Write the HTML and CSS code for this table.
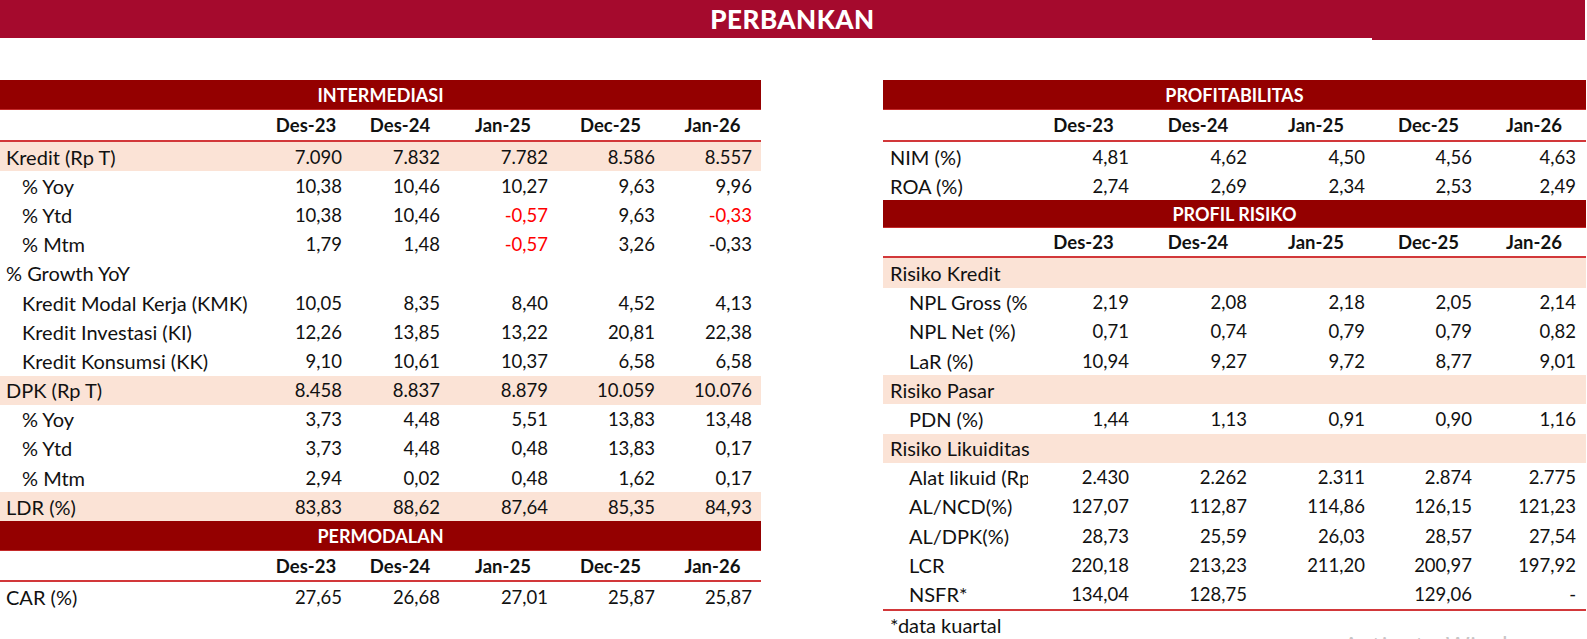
FILE: index.html
```html
<!DOCTYPE html>
<html lang="id">
<head>
<meta charset="utf-8">
<title>Perbankan</title>
<link rel="stylesheet" href="styles.css">
</head>
<body>
<div class="title">PERBANKAN</div>
<div class="main">
  <section class="panel left">
    <div class="bar">INTERMEDIASI</div>
    <div class="row head"><span></span><span>Des-23</span><span>Des-24</span><span>Jan-25</span><span>Dec-25</span><span>Jan-26</span></div>
    <div class="row hl"><span class="lbl">Kredit (Rp T)</span><span>7.090</span><span>7.832</span><span>7.782</span><span>8.586</span><span>8.557</span></div>
    <div class="row"><span class="lbl sub">% Yoy</span><span>10,38</span><span>10,46</span><span>10,27</span><span>9,63</span><span>9,96</span></div>
    <div class="row"><span class="lbl sub">% Ytd</span><span>10,38</span><span>10,46</span><span class="neg">-0,57</span><span>9,63</span><span class="neg">-0,33</span></div>
    <div class="row"><span class="lbl sub">% Mtm</span><span>1,79</span><span>1,48</span><span class="neg">-0,57</span><span>3,26</span><span>-0,33</span></div>
    <div class="row"><span class="lbl">% Growth YoY</span><span></span><span></span><span></span><span></span><span></span></div>
    <div class="row"><span class="lbl sub">Kredit Modal Kerja (KMK)</span><span>10,05</span><span>8,35</span><span>8,40</span><span>4,52</span><span>4,13</span></div>
    <div class="row"><span class="lbl sub">Kredit Investasi (KI)</span><span>12,26</span><span>13,85</span><span>13,22</span><span>20,81</span><span>22,38</span></div>
    <div class="row"><span class="lbl sub">Kredit Konsumsi (KK)</span><span>9,10</span><span>10,61</span><span>10,37</span><span>6,58</span><span>6,58</span></div>
    <div class="row hl"><span class="lbl">DPK (Rp T)</span><span>8.458</span><span>8.837</span><span>8.879</span><span>10.059</span><span>10.076</span></div>
    <div class="row"><span class="lbl sub">% Yoy</span><span>3,73</span><span>4,48</span><span>5,51</span><span>13,83</span><span>13,48</span></div>
    <div class="row"><span class="lbl sub">% Ytd</span><span>3,73</span><span>4,48</span><span>0,48</span><span>13,83</span><span>0,17</span></div>
    <div class="row"><span class="lbl sub">% Mtm</span><span>2,94</span><span>0,02</span><span>0,48</span><span>1,62</span><span>0,17</span></div>
    <div class="row hl"><span class="lbl">LDR (%)</span><span>83,83</span><span>88,62</span><span>87,64</span><span>85,35</span><span>84,93</span></div>
    <div class="bar">PERMODALAN</div>
    <div class="row head mid"><span></span><span>Des-23</span><span>Des-24</span><span>Jan-25</span><span>Dec-25</span><span>Jan-26</span></div>
    <div class="row"><span class="lbl">CAR (%)</span><span>27,65</span><span>26,68</span><span>27,01</span><span>25,87</span><span>25,87</span></div>
  </section>

  <section class="panel right">
    <div class="bar">PROFITABILITAS</div>
    <div class="row head"><span></span><span>Des-23</span><span>Des-24</span><span>Jan-25</span><span>Dec-25</span><span>Jan-26</span></div>
    <div class="row"><span class="lbl">NIM (%)</span><span>4,81</span><span>4,62</span><span>4,50</span><span>4,56</span><span>4,63</span></div>
    <div class="row"><span class="lbl">ROA (%)</span><span>2,74</span><span>2,69</span><span>2,34</span><span>2,53</span><span>2,49</span></div>
    <div class="bar short">PROFIL RISIKO</div>
    <div class="row head short"><span></span><span>Des-23</span><span>Des-24</span><span>Jan-25</span><span>Dec-25</span><span>Jan-26</span></div>
    <div class="row hl"><span class="lbl grp">Risiko Kredit</span><span></span><span></span><span></span><span></span><span></span></div>
    <div class="row"><span class="lbl sub">NPL Gross (%)</span><span>2,19</span><span>2,08</span><span>2,18</span><span>2,05</span><span>2,14</span></div>
    <div class="row"><span class="lbl sub">NPL Net (%)</span><span>0,71</span><span>0,74</span><span>0,79</span><span>0,79</span><span>0,82</span></div>
    <div class="row"><span class="lbl sub">LaR (%)</span><span>10,94</span><span>9,27</span><span>9,72</span><span>8,77</span><span>9,01</span></div>
    <div class="row hl"><span class="lbl grp">Risiko Pasar</span><span></span><span></span><span></span><span></span><span></span></div>
    <div class="row"><span class="lbl sub">PDN (%)</span><span>1,44</span><span>1,13</span><span>0,91</span><span>0,90</span><span>1,16</span></div>
    <div class="row hl"><span class="lbl grp">Risiko Likuiditas</span><span></span><span></span><span></span><span></span><span></span></div>
    <div class="row"><span class="lbl sub">Alat likuid (Rp T)</span><span>2.430</span><span>2.262</span><span>2.311</span><span>2.874</span><span>2.775</span></div>
    <div class="row"><span class="lbl sub">AL/NCD(%)</span><span>127,07</span><span>112,87</span><span>114,86</span><span>126,15</span><span>121,23</span></div>
    <div class="row"><span class="lbl sub">AL/DPK(%)</span><span>28,73</span><span>25,59</span><span>26,03</span><span>28,57</span><span>27,54</span></div>
    <div class="row"><span class="lbl sub">LCR</span><span>220,18</span><span>213,23</span><span>211,20</span><span>200,97</span><span>197,92</span></div>
    <div class="row last"><span class="lbl sub">NSFR*</span><span>134,04</span><span>128,75</span><span></span><span>129,06</span><span>-</span></div>
    <div class="note">*data kuartal</div>
  </section>
</div>
<div class="watermark">Activate Windows</div>
</body>
</html>
```

FILE: styles.css
```css
html, body {
  margin: 0;
  padding: 0;
}

body {
  width: 1587px;
  height: 639px;
  overflow: hidden;
  position: relative;
  background: #ffffff;
  color: #111111;
  font-family: Lato, "Liberation Sans", sans-serif;
  font-size: 18.5px;
}

.title {
  position: relative;
  width: 1585px;
  height: 38px;
  background: #a50a2d;
  color: #ffffff;
  font-weight: 900;
  font-size: 26px;
  letter-spacing: 0.5px;
  display: flex;
  align-items: center;
  justify-content: center;
}

.title::after {
  content: "";
  position: absolute;
  right: 0;
  bottom: -2px;
  width: 213px;
  height: 2px;
  background: #a50a2d;
}

.main {
  display: flex;
  gap: 122px;
  margin-top: 42px;
}

.panel {
  display: flex;
  flex-direction: column;
}

.left {
  width: 761px;
}

.right {
  width: 703px;
}

.bar {
  height: 29px;
  border-bottom: 1px solid #c42a2a;
  background: #940000;
  color: #ffffff;
  font-weight: 700;
  font-size: 18px;
  display: flex;
  align-items: center;
  justify-content: center;
}

.bar.short {
  height: 27px;
}

.row {
  display: grid;
  height: 29.2px;
  align-items: center;
}

.left .row {
  grid-template-columns: 261px 90px 98px 108px 107px 97px;
}

.right .row {
  grid-template-columns: 145px 111px 118px 118px 107px 104px;
}

.row > span {
  text-align: right;
  padding-right: 9px;
  white-space: nowrap;
}

.right .row > span {
  padding-right: 10px;
}

.row > .lbl,
.right .row > .lbl {
  text-align: left;
  padding-right: 0;
  padding-left: 6px;
  overflow: hidden;
  font-size: 20px;
}

.row > .lbl.grp,
.right .row > .lbl.grp {
  overflow: visible;
}

.row > .lbl.sub {
  padding-left: 22px;
}

.right .row > .lbl {
  padding-left: 7px;
}

.right .row > .lbl.sub {
  padding-left: 26px;
}

.head {
  height: 30px;
  border-bottom: 2px solid #d2383a;
  font-weight: 700;
}

.head.mid {
  height: 29px;
}

.head.short {
  height: 28px;
}

.head > span,
.right .head > span {
  text-align: center;
  padding-right: 0;
}

.hl {
  background: #fbe3d6;
}

.neg {
  color: #ff0000;
}

.last {
  border-bottom: 2px solid #d2383a;
}

.note {
  height: 29px;
  line-height: 29px;
  padding-left: 7px;
  font-size: 20px;
}

.watermark {
  position: absolute;
  left: 1343px;
  top: 627px;
  color: #c6c6c6;
  font-family: "Open Sans", sans-serif;
  font-size: 26px;
  white-space: nowrap;
}
```
